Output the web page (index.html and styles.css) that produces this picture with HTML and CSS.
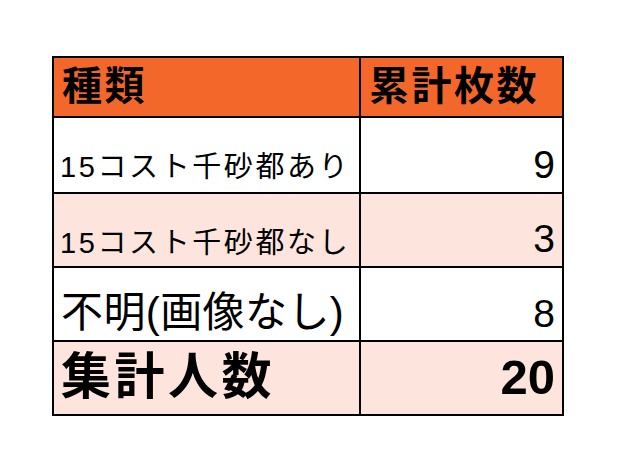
FILE: index.html
```html
<!DOCTYPE html>
<html lang="ja">
<head>
<meta charset="utf-8">
<link rel="stylesheet" href="styles.css">
</head>
<body>
<div class="sheet">
  <div class="cell head left">種類</div>
  <div class="cell head">累計枚数</div>

  <div class="cell r1 left small">15コスト千砂都あり</div>
  <div class="cell r1 num">9</div>

  <div class="cell r2 pink left small">15コスト千砂都なし</div>
  <div class="cell r2 pink num">3</div>

  <div class="cell r3 left mid">不明(画像なし)</div>
  <div class="cell r3 num">8</div>

  <div class="cell r4 pink left total">集計人数</div>
  <div class="cell r4 pink num totalnum">20</div>
</div>
</body>
</html>
```
FILE: styles.css
```css
html, body {
  margin: 0;
  padding: 0;
  background: #ffffff;
}

body {
  font-family: "Liberation Sans", "Noto Sans CJK JP", sans-serif;
  color: #000000;
}

.sheet {
  margin: 56px 0 0 52px;
  width: 512px;
  box-sizing: border-box;
  display: grid;
  grid-template-columns: 305px 201px;
  grid-template-rows: 58px 74px 72px 72px 72px;
  gap: 2px;
  padding: 2px;
  background: #000000;
}

.cell {
  display: flex;
  align-items: flex-end;
  background: #ffffff;
  line-height: 1;
  padding: 0 7px;
  white-space: nowrap;
  overflow: hidden;
}

.pink {
  background: #fde5dd;
}

.head {
  background: #f4672a;
  font-weight: 700;
  font-size: 40px;
  letter-spacing: 2.5px;
  padding-bottom: 10px;
  padding-left: 8px;
}

.num {
  justify-content: flex-end;
  font-size: 39px;
  padding-bottom: 8px;
}

.small {
  font-size: 29px;
  letter-spacing: 2.6px;
  padding-left: 6px;
}

.r1.small {
  padding-bottom: 10px;
}

.r2.small {
  padding-bottom: 8px;
}

.mid {
  font-size: 42px;
  letter-spacing: 0.4px;
  padding-bottom: 6px;
}

.r3.num {
  padding-bottom: 7px;
}

.total {
  font-weight: 700;
  font-size: 50px;
  letter-spacing: 3.5px;
  padding-bottom: 12px;
}

.totalnum {
  font-weight: 700;
  font-size: 49px;
  padding-bottom: 12px;
}
```
